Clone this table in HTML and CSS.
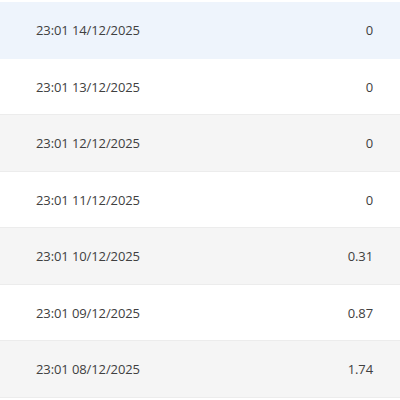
FILE: index.html
```html
<!DOCTYPE html>
<html lang="en">
<head>
	<meta charset="UTF-8">
	<meta name="viewport" content="width=device-width, initial-scale=1.0">
	<title>History</title>
	<link rel="stylesheet" href="styles.css">
</head>
<body>
	<div class="history">
		<div class="row current">
			<div class="time">23:01 14/12/2025</div>
			<div class="value">0</div>
		</div>
		<div class="row">
			<div class="time">23:01 13/12/2025</div>
			<div class="value">0</div>
		</div>
		<div class="row">
			<div class="time">23:01 12/12/2025</div>
			<div class="value">0</div>
		</div>
		<div class="row">
			<div class="time">23:01 11/12/2025</div>
			<div class="value">0</div>
		</div>
		<div class="row">
			<div class="time">23:01 10/12/2025</div>
			<div class="value">0.31</div>
		</div>
		<div class="row">
			<div class="time">23:01 09/12/2025</div>
			<div class="value">0.87</div>
		</div>
		<div class="row">
			<div class="time">23:01 08/12/2025</div>
			<div class="value">1.74</div>
		</div>
	</div>
</body>
</html>
```

FILE: styles.css
```css
html, body {
	padding: 0;
	margin: 0;
}

body {
	background: #fff;
	font-family: "Open Sans", "Noto Sans", sans-serif;
	font-size: 13px;
	letter-spacing: -0.1px;
	color: #404040;
}

.history {
	display: flex;
	flex-direction: column;
	padding-top: 2px;
}

.row {
	align-items: center;
	box-sizing: border-box;
	display: flex;
	height: 56.5px;
	justify-content: space-between;
	padding: 1px 27px 0 36px;
	border-bottom: 1px solid #ececec;
}

.row:nth-child(odd) {
	background: #f5f5f5;
}

.row.current {
	background: #eef4fc;
	border-bottom-color: #eef4fc;
}
```
